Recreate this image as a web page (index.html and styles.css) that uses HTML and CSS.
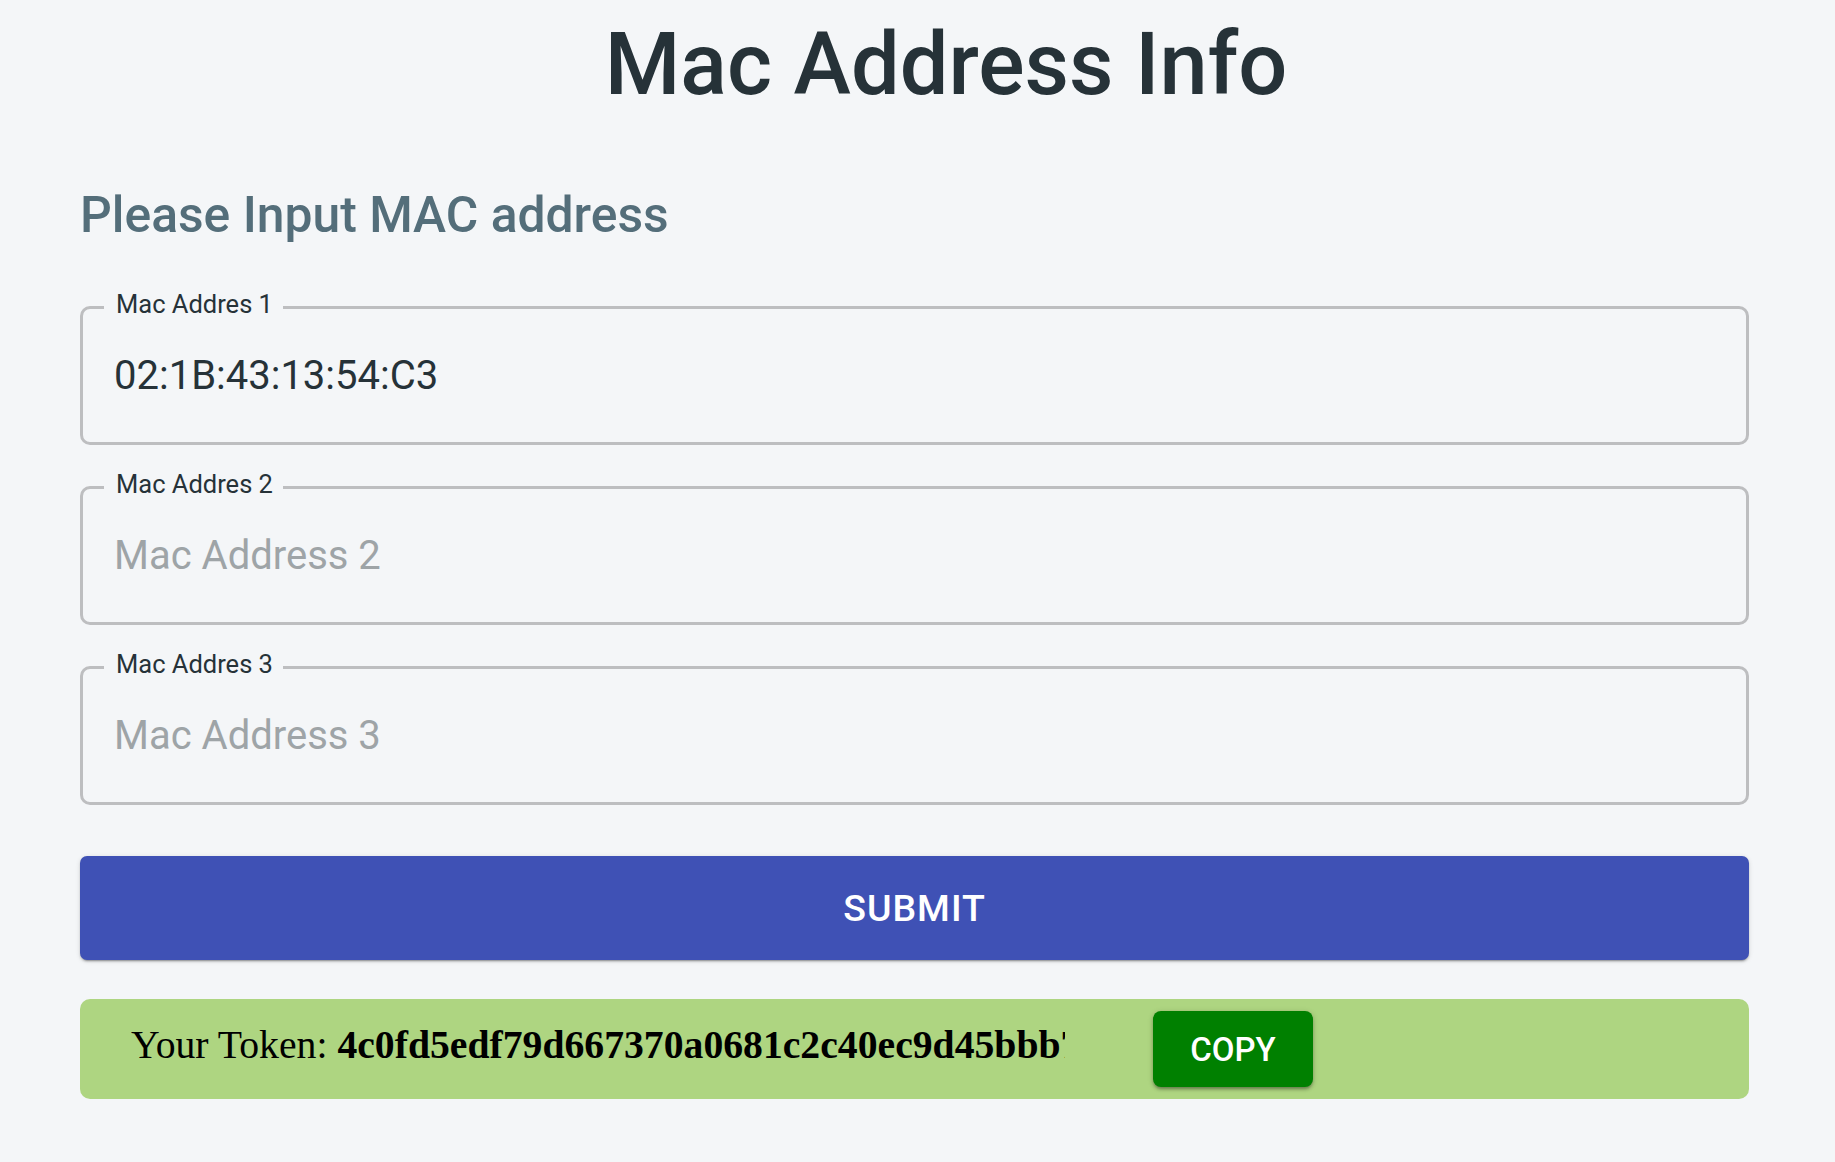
FILE: index.html
```html
<!DOCTYPE html>
<html lang="en">
<head>
<meta charset="utf-8">
<title>Mac Address Info</title>
<link rel="stylesheet" href="styles.css">
</head>
<body>
  <h1 class="title">Mac Address Info</h1>
  <main class="container">
    <h2 class="subtitle">Please Input MAC address</h2>
    <div class="field">
      <label class="field-label" for="mac1">Mac Addres 1</label>
      <input class="field-input" id="mac1" type="text" value="02:1B:43:13:54:C3">
    </div>
    <div class="field">
      <label class="field-label" for="mac2">Mac Addres 2</label>
      <input class="field-input" id="mac2" type="text" placeholder="Mac Address 2">
    </div>
    <div class="field">
      <label class="field-label" for="mac3">Mac Addres 3</label>
      <input class="field-input" id="mac3" type="text" placeholder="Mac Address 3">
    </div>
    <button class="submit" type="button">Submit</button>
    <div class="token-box">
      <div class="token-text">Your Token: <b>4c0fd5edf79d667370a0681c2c40ec9d45bbb7e21a9c3f08d6b2e5a17c94f0d3</b></div>
      <button class="copy" type="button">Copy</button>
    </div>
  </main>
</body>
</html>
```
FILE: styles.css
```css
html, body {
  margin: 0;
  padding: 0;
  background: #f4f6f8;
}

body {
  font-family: Roboto, "Noto Sans", sans-serif;
  color: #263238;
}

.title {
  margin: 14px 0 0 0;
  padding-left: 57px;
  text-align: center;
  font-size: 86.5px;
  font-weight: 500;
  line-height: normal;
  color: #263238;
}

.container {
  width: 1669px;
  margin-left: 80px;
  display: flex;
  flex-direction: column;
}

.subtitle {
  margin: 71px 0 0 0;
  font-size: 49.8px;
  font-weight: 500;
  line-height: normal;
  color: #546e7a;
}

.field {
  position: relative;
  height: 139px;
  box-sizing: border-box;
  border: 3px solid #bdbec0;
  border-radius: 10px;
  margin-top: 41px;
  display: flex;
  align-items: center;
}

.field + .field {
  margin-top: 41px;
}

.subtitle + .field {
  margin-top: 62px;
}

.field-label {
  position: absolute;
  left: 21px;
  top: -20px;
  padding: 0 10px 0 12px;
  background: #f4f6f8;
  font-size: 25.5px;
  line-height: normal;
  color: #263238;
}

.field-input {
  flex: 1;
  border: none;
  outline: none;
  background: transparent;
  font-family: Roboto, "Noto Sans", sans-serif;
  font-size: 40px;
  color: #263238;
  padding: 0 0 0 31px;
  margin: 0;
  line-height: normal;
}

.field-input::placeholder {
  color: #9ea4a7;
  opacity: 1;
}

.submit {
  margin-top: 51px;
  height: 104px;
  border: none;
  border-radius: 7px;
  background: #3f51b5;
  color: #ffffff;
  font-family: Roboto, "Noto Sans", sans-serif;
  font-size: 37.5px;
  font-weight: 500;
  letter-spacing: 1px;
  text-transform: uppercase;
  box-shadow: 0 3px 1px -2px rgba(0,0,0,0.2), 0 2px 2px 0 rgba(0,0,0,0.14), 0 1px 5px 0 rgba(0,0,0,0.12);
  cursor: pointer;
}

.token-box {
  margin-top: 39px;
  height: 100px;
  box-sizing: border-box;
  background: #aed581;
  border-radius: 10px;
  padding-left: 51px;
  display: flex;
  align-items: center;
}

.token-text {
  width: 934px;
  overflow: hidden;
  white-space: nowrap;
  font-family: "Liberation Serif", "Times New Roman", serif;
  font-size: 39.7px;
  color: #000000;
  margin-bottom: 8px;
}

.token-text b {
  font-weight: 700;
}

.copy {
  margin-left: 88px;
  width: 160px;
  height: 76px;
  border: none;
  border-radius: 8px;
  background: #008000;
  color: #ffffff;
  font-family: Roboto, "Noto Sans", sans-serif;
  font-size: 33px;
  font-weight: 500;
  text-transform: uppercase;
  box-shadow: 0 3px 3px -1px rgba(0,0,0,0.25), 0 2px 4px 0 rgba(0,0,0,0.14), 0 1px 6px 0 rgba(0,0,0,0.12);
  cursor: pointer;
}
```
